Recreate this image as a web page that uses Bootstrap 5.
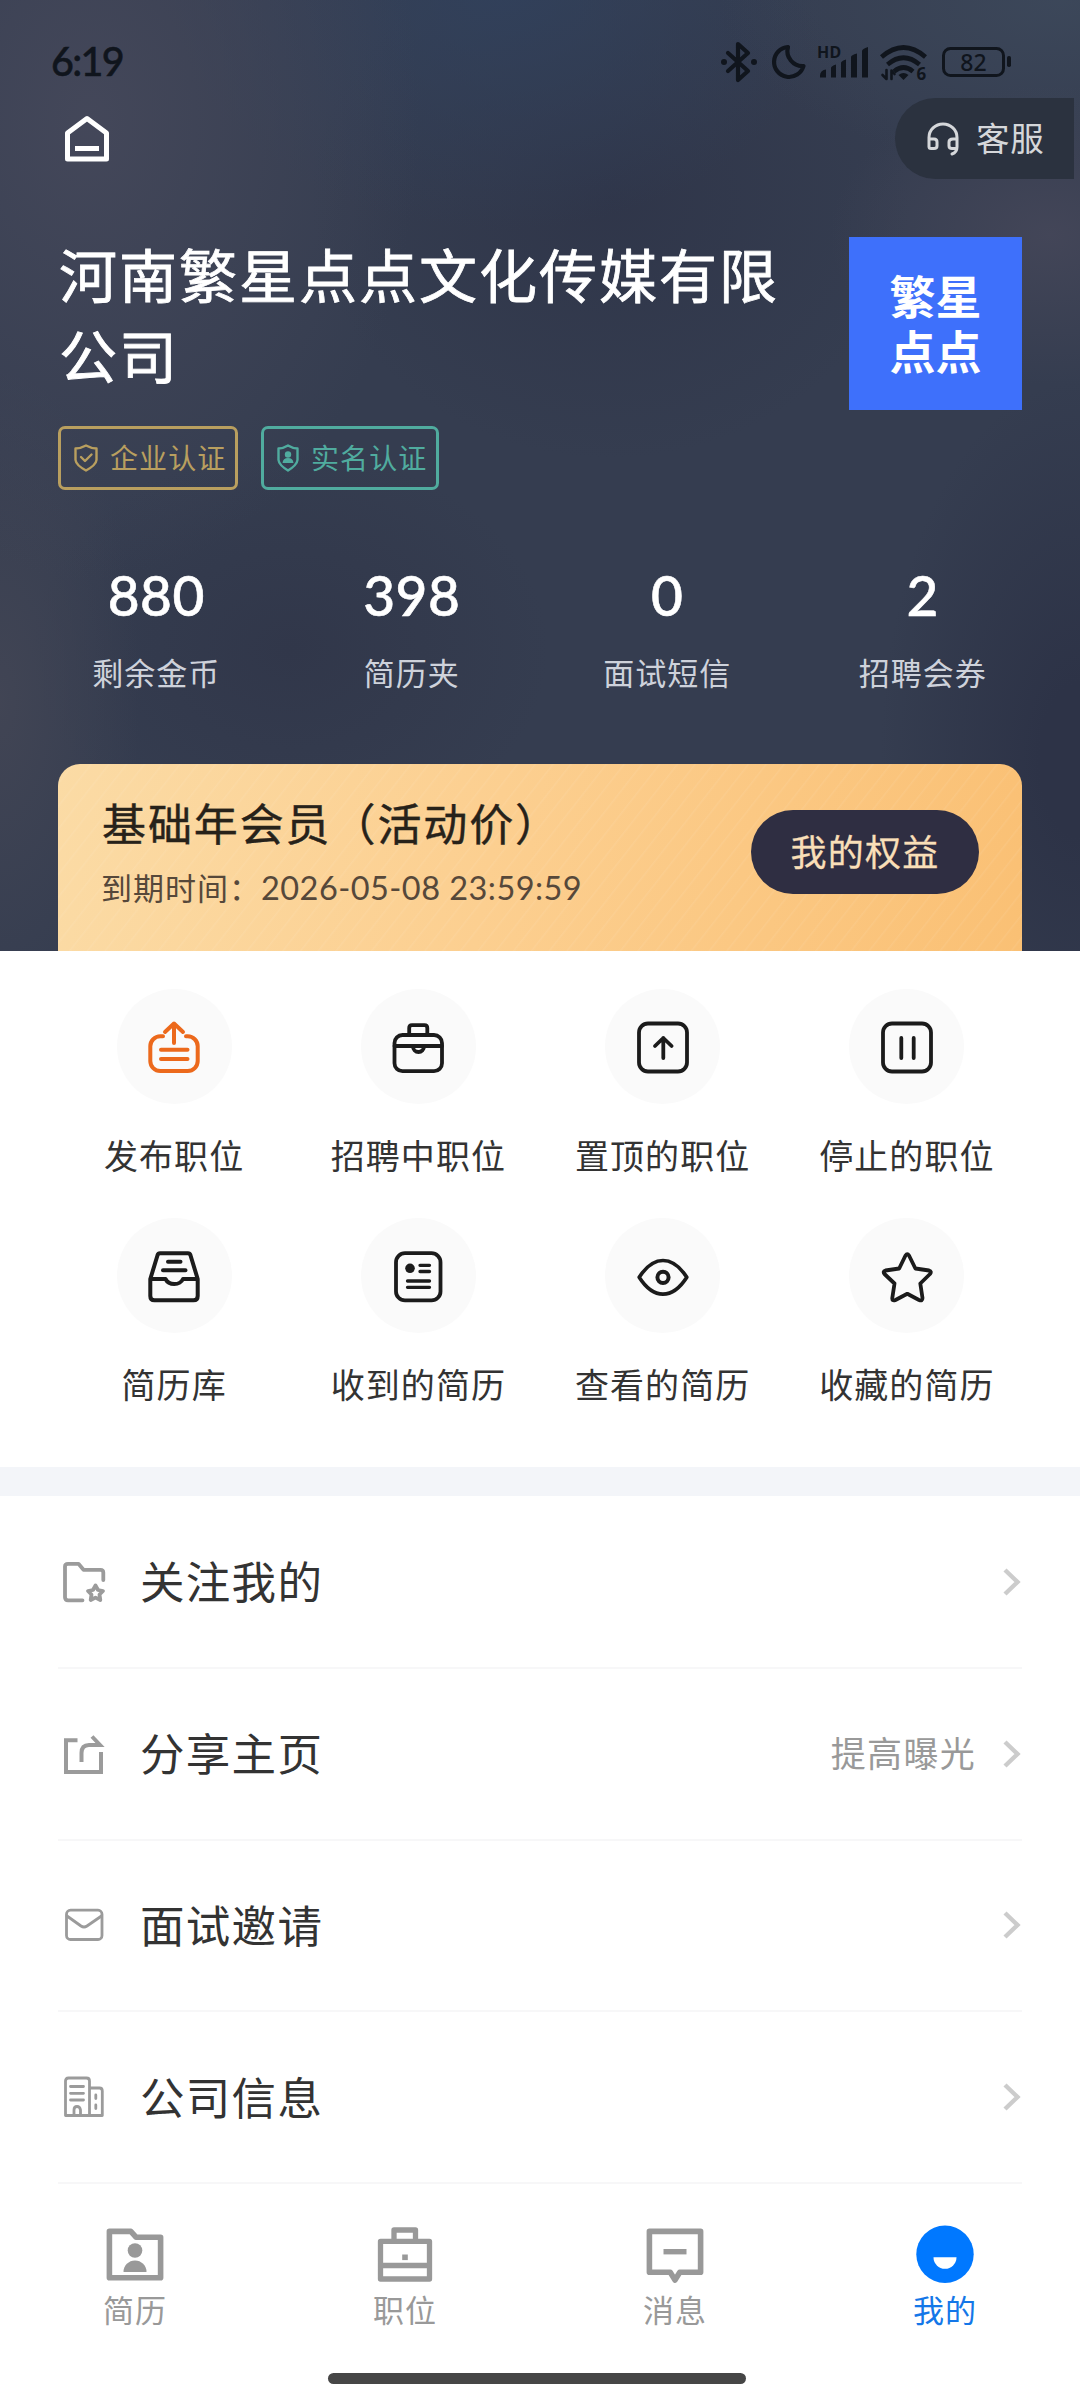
<!DOCTYPE html>
<html lang="zh-CN">
<head>
<meta charset="utf-8">
<meta name="viewport" content="width=device-width, initial-scale=1">
<title>我的</title>
<link href="https://cdn.jsdelivr.net/npm/bootstrap@5.3.0/dist/css/bootstrap.min.css" rel="stylesheet">
<style>
body{width:1080px;height:2400px;overflow:hidden;background:#fff;color:#333;font-family:"Noto Sans CJK SC","Noto Sans",sans-serif}
svg{display:block;flex:none;overflow:visible}
.ln{fill:none;stroke:currentColor;stroke-linecap:round;stroke-linejoin:round}
.hero{height:951px;color:#fff;background:
 radial-gradient(ellipse 330px 460px at 90px 120px,#494b5dbb 0,#494b5d00 100%),
 radial-gradient(ellipse 220px 150px at 1050px 235px,#4a4a5caa 0,#4a4a5c00 100%),
 radial-gradient(ellipse 340px 170px at 1060px 0,#42506288 0,#42506200 100%),
 radial-gradient(ellipse 330px 240px at 500px -10px,#31415cdd 0,#31415c00 100%),
 radial-gradient(ellipse 300px 260px at 610px 200px,#2e3448cc 0,#2e344800 100%),
 radial-gradient(ellipse 140px 330px at 0 700px,#434655dd 0,#43465500 100%),
 radial-gradient(ellipse 260px 200px at 290px 650px,#2f3447aa 0,#2f344700 100%),
 radial-gradient(ellipse 200px 380px at 1080px 760px,#2d3347 20%,#2d334700 100%),
 #353d50}
.status{height:98px;padding:0 59px 0 51px;color:#10151d}
.clock{font:500 39.500px/56px "Lato","Noto Sans",sans-serif;letter-spacing:-1.7px;padding-top:33px;-webkit-text-stroke:.5px #10151d}
.status-icons{margin-top:39px}
.topbar{height:81px;padding-left:64px;padding-right:6px}
.service{width:179px;height:81px;border-radius:41px 0 0 41px;background:#2b323f;color:#d5d7da;padding-left:31px;gap:16px;font-size:33.500px;letter-spacing:.8px;line-height:50px}
.service span{margin-top:-3px}
.company{padding:58px 58px 0 59px;height:241px}
.company h1{font-size:58px;letter-spacing:2px;line-height:80.500px;width:740px;margin:-4px 0 0;font-weight:400;-webkit-text-stroke:.8px #fff}
.logo{width:173px;height:173px;background:#3e70fb;font-size:46px;font-weight:700;line-height:55px;padding-top:30px}
.tags{padding:6px 0 0 58px;height:70px;gap:23px}
.tag{height:64px;border:3px solid;border-radius:7px;font-size:28px;letter-spacing:1.1px;padding-left:13px;gap:12px}
.tag span{margin-top:-2px}
.tag.gold{width:180px;color:#b99f5f}.tag.teal{width:178px;color:#50ac9f;padding-left:13px}
.stats{height:274px;padding:76px 29.500px 0 28.500px}
.stats b{display:block;font:500 55px/56px "Lato","Noto Sans",sans-serif;letter-spacing:.5px;-webkit-text-stroke:.6px #fff;margin-top:1px}
.stats span{display:block;font-size:31px;letter-spacing:1px;line-height:46px;color:#ced2db;margin-top:26px}
.vip{margin:0 58px;height:187px;border-radius:22px 22px 0 0;padding:0 43px 0 44px;color:#27221a;
 background:repeating-linear-gradient(128deg,#fff0 0,#fff0 11px,#ffffff12 12px,#fff0 14px),linear-gradient(100deg,#fbdba5 0,#fccf90 45%,#fac074 100%)}
.vip h2{font-size:44px;letter-spacing:1.900px;line-height:60px;margin:0;font-weight:400;padding-top:28px;-webkit-text-stroke:.4px #27221a}
.vip p{font-size:31px;letter-spacing:1px;line-height:44px;margin:13px 0 0 -1px;color:#56483a;white-space:nowrap}
.vip p span{font-family:"Lato",sans-serif;font-size:32.500px;letter-spacing:.45px}
.rights{width:228px;height:84px;border-radius:42px;background:#2f2e42;color:#f9dfb8;font-size:36px;letter-spacing:1.200px;line-height:76px;margin-top:46px;border:0;padding:0 0 4px;-webkit-text-stroke:.3px #f9dfb8}
.tools{height:516px;padding:38px 51px 0 52px}
.tool{height:229px}
.disc{width:115px;height:115px;border-radius:50%;background:#fafafa;color:#1b1b1b}
.tool span{font-size:34px;letter-spacing:1.100px;line-height:50px;margin-top:26px;white-space:nowrap}
.tool .orange{color:#ec691c}
.band{height:29px;background:#f3f5f9}
.menu{padding:1px 58px 0;height:688px}
.entry{height:171.800px;border-bottom:2px solid #f7f7f8;padding:0 1px 0 4px;font-size:44.500px;letter-spacing:1.300px;line-height:64px}
.entry svg{color:#9b9b9b}
.entry .txt{margin-left:34px;margin-top:-3px}
.entry .hint{font-size:35px;letter-spacing:1.300px;color:#999;margin-right:27px;margin-top:-3px}
.entry svg.chev{color:#ccc}
.tabs{height:189px}
.tabitem{padding-top:31px;color:#999;font-size:31px;letter-spacing:1px;line-height:44px}
.tabitem.on{color:#1477e8}
.tabitem svg{margin-bottom:8px;margin-right:1px}
.pill{width:418px;height:11px;border-radius:6px;background:#464646;margin-left:328px}
</style>
</head>
<body>
<header class="hero">
 <div class="status d-flex justify-content-between">
  <div class="clock">6:19</div>
  <svg class="status-icons" width="300" height="42" viewBox="0 0 300 42" fill="currentColor">
   <path class="ln" d="M7 14L27 32L17 41V5L27 14L7 32" stroke-width="4.200"/>
   <circle cx="3" cy="23" r="3"/><circle cx="33" cy="23" r="3"/>
   <path class="ln" stroke-width="4.200" d="M67 8A15 15 0 1 0 82.500 27A15 15 0 0 1 67 8Z"/>
   <text x="96" y="19" font-family="Noto Sans" font-weight="700" font-size="16" letter-spacing=".3">HD</text>
   <path d="M99 38.500v-2a6 6 0 0 1 6-6v8zM110 29q0-2 5-3.500v13h-5zM120 24q0-2 5-3.500v18h-5zM130 18q0-2 6-3.500v24h-6zM141 12q0-2 6-4v30.500h-6z"/>
   <g fill="none" stroke="currentColor" stroke-width="4.600"><path d="M160.500 18Q182.500-1 204.500 18"/><path d="M166.500 25.500Q182.500 12 198.500 25.500"/><path d="M173 32.500Q182.500 24.500 192 32.500"/></g>
   <path d="M177.500 36q5-4 10 0l-5 5z"/>
   <path class="ln" stroke-width="2.600" d="M165.500 31v9l-4-4M170.500 40V31.500l3 3.500"/>
   <text x="195.500" y="41" font-family="Noto Sans" font-weight="700" font-size="17">6</text>
   <rect x="222.500" y="9.500" width="60" height="27" rx="7" fill="none" stroke="currentColor" stroke-width="3"/>
   <rect x="286" y="17" width="4" height="11" rx="1.800"/>
   <text x="252.500" y="31.500" text-anchor="middle" font-family="Noto Sans" font-weight="500" font-size="23">82</text>
  </svg>
 </div>
 <div class="topbar d-flex justify-content-between align-items-center">
  <svg width="46" height="48" viewBox="0 0 46 48"><path d="M3.500 18L23 3.500L42.500 18V44H3.500Z" fill="none" stroke="#fff" stroke-width="5" stroke-linejoin="round"/><path d="M11 33.500H35" stroke="#fff" stroke-width="5"/></svg>
  <div class="service d-flex align-items-center">
   <svg class="ln" width="34" height="34" viewBox="0 0 34 34" stroke-width="3"><path d="M3 25V15.500A14 13.500 0 0 1 31 15.500V25C31 29 29 31 26 32M3 17H8Q11 17 11 20V24Q11 26.500 8 26.500H5Q3 26.500 3 24.500M31 17H27Q23 17 23 20V24Q23 26.500 26 26.500H30"/></svg>
   <span>客服</span>
  </div>
 </div>
 <div class="company d-flex justify-content-between">
  <h1>河南繁星点点文化传媒有限公司</h1>
  <div class="logo text-center">繁星<br>点点</div>
 </div>
 <div class="tags d-flex">
  <div class="tag gold d-flex align-items-center">
   <svg class="ln" width="24" height="28" viewBox="0 0 24 28" stroke-width="2.400"><path d="M12 1.500Q17 4.300 22.500 4.500V16Q22 21 12 26.500Q2 21 1.500 16V4.500Q7 4.300 12 1.500Z"/><path d="M7 13L11 17L17.500 10.500"/></svg>
   <span>企业认证</span>
  </div>
  <div class="tag teal d-flex align-items-center">
   <svg width="22" height="28" viewBox="0 0 22 28"><path class="ln" stroke-width="2.400" d="M11 1.500Q15.500 4.300 20.500 4.500V16Q20 21 11 26.500Q2 21 1.500 16V4.500Q6.500 4.300 11 1.500Z"/><circle cx="11" cy="10.500" r="3.200" fill="currentColor"/><path d="M5.500 19Q6 14 11 14T16.500 19Z" fill="currentColor"/></svg>
   <span>实名认证</span>
  </div>
 </div>
 <div class="stats row g-0 text-center">
  <div class="col"><b>880</b><span>剩余金币</span></div>
  <div class="col"><b>398</b><span>简历夹</span></div>
  <div class="col"><b>0</b><span>面试短信</span></div>
  <div class="col"><b>2</b><span>招聘会券</span></div>
 </div>
 <div class="vip d-flex justify-content-between">
  <div><h2>基础年会员（活动价）</h2><p>到期时间：<span>2026-05-08 23:59:59</span></p></div>
  <button class="rights">我的权益</button>
 </div>
</header>

<section class="tools row g-0 align-content-start text-center">
 <div class="tool col-3 d-flex flex-column align-items-center"><div class="disc orange d-flex align-items-center justify-content-center"><svg class="ln" width="60" height="60" stroke-width="4"><path d="M19 19.300H16.300A10 10 0 0 0 6.300 29.300V44A10 10 0 0 0 16.300 54H43.700A10 10 0 0 0 53.700 44V29.300A10 10 0 0 0 43.700 19.300H42M30 26V6.500M21 15L30 6.500L39 15M17 32.700H43.500M17 42H43.500"/></svg></div><span>发布职位</span></div>
 <div class="tool col-3 d-flex flex-column align-items-center"><div class="disc d-flex align-items-center justify-content-center"><svg class="ln" width="60" height="60" stroke-width="3.800"><rect x="6.500" y="18" width="47.500" height="36.200" rx="8"/><path d="M21.200 18V11Q21.200 8.200 24 8.200H36.500Q39.300 8.200 39.300 11V18M6.500 29H54M25 29.500A5.500 5.500 0 0 0 36 29.500"/></svg></div><span>招聘中职位</span></div>
 <div class="tool col-3 d-flex flex-column align-items-center"><div class="disc d-flex align-items-center justify-content-center"><svg class="ln" width="60" height="60" stroke-width="3.800"><rect x="6" y="6.500" width="48" height="48" rx="9"/><path d="M30.300 41V21M22 29L30.300 21L38.600 29"/></svg></div><span>置顶的职位</span></div>
 <div class="tool col-3 d-flex flex-column align-items-center"><div class="disc d-flex align-items-center justify-content-center"><svg class="ln" width="60" height="60" stroke-width="3.800"><rect x="6" y="6.500" width="48" height="48" rx="9"/><path d="M24.300 21V41M36.700 21V41"/></svg></div><span>停止的职位</span></div>
 <div class="tool col-3 d-flex flex-column align-items-center"><div class="disc d-flex align-items-center justify-content-center"><svg class="ln" width="60" height="60" stroke-width="4"><path d="M6.300 33L13.600 9Q14.200 7.200 16 7.200H44Q45.800 7.200 46.400 9L53.700 33V50Q53.700 54.300 49.500 54.300H10.500Q6.300 54.300 6.300 50ZM6.300 33H21.500Q24 38 30.300 38T39 33H53.700M24 15.700H36.500M19 24.300H41.500"/></svg></div><span>简历库</span></div>
 <div class="tool col-3 d-flex flex-column align-items-center"><div class="disc d-flex align-items-center justify-content-center"><svg class="ln" width="60" height="60" stroke-width="3.300"><rect x="8" y="7.200" width="44.500" height="47.200" rx="9" stroke-width="3.800"/><circle cx="22" cy="22.300" r="4.800" fill="currentColor" stroke="none"/><path d="M32 19.300H41.500M32 25.500H41.500M19.500 35H41.500M19.500 41.300H41.500"/></svg></div><span>收到的简历</span></div>
 <div class="tool col-3 d-flex flex-column align-items-center"><div class="disc d-flex align-items-center justify-content-center"><svg class="ln" width="60" height="60" stroke-width="3.700"><path d="M6.200 31.300Q17 14.500 30 14.500T53.800 31.300Q43 48.200 30 48.200T6.200 31.300Z"/><circle cx="30" cy="31.300" r="5.600" stroke-width="4"/></svg></div><span>查看的简历</span></div>
 <div class="tool col-3 d-flex flex-column align-items-center"><div class="disc d-flex align-items-center justify-content-center"><svg class="ln" width="60" height="60" stroke-width="3.800"><path d="M28.500 9.500Q30.300 7 32 9.500L38.400 22.500L52 24.500Q55 25.500 53 28L43.300 37.500L45.500 52Q45.500 55.500 42 54L30.300 47.800L18.500 54Q15 55.500 15.300 52L17.500 37.500L7.500 28Q5.500 25.500 8.500 24.500L22.200 22.500Z"/></svg></div><span>收藏的简历</span></div>
</section>
<div class="band"></div>

<section class="menu">
 <div class="entry d-flex align-items-center">
  <svg class="ln" width="44" height="44" viewBox="0 0 44 44" stroke-width="3.800"><path d="M20.500 40.300H6Q3 40.300 3 37.300V6.500Q3 3.800 6 3.800H16.500L21.500 9.800H38.500Q41.300 9.800 41.300 12.500V20"/><path stroke-width="3.800" d="M33.500 25.500L36 30L41 31L37.500 34.500L38.300 40L33.500 37.600L28.700 40L29.500 34.500L26 31L31 30Z"/></svg>
  <span class="txt">关注我的</span>
  <svg class="chev ms-auto" width="18" height="28" viewBox="0 0 18 28" fill="none" stroke="currentColor" stroke-width="4.400"><path d="M2 2L14.500 14L2 26"/></svg>
 </div>
 <div class="entry d-flex align-items-center">
  <svg width="44" height="44" viewBox="0 0 44 44" fill="none" stroke="currentColor" stroke-width="4"><path d="M15.500 8.300H4V40H39V20"/><path d="M19.500 30V21Q19.500 13 27 13H38L30 4.500"/></svg>
  <span class="txt">分享主页</span><span class="hint ms-auto">提高曝光</span>
  <svg class="chev" width="18" height="28" viewBox="0 0 18 28" fill="none" stroke="currentColor" stroke-width="4.400"><path d="M2 2L14.500 14L2 26"/></svg>
 </div>
 <div class="entry d-flex align-items-center">
  <svg class="ln" width="44" height="44" viewBox="0 0 44 44" stroke-width="2.800"><rect x="4.500" y="7.200" width="35.500" height="29.300" rx="4"/><path d="M5 13L19 23Q22 25 25 23L39.500 13"/></svg>
  <span class="txt">面试邀请</span>
  <svg class="chev ms-auto" width="18" height="28" viewBox="0 0 18 28" fill="none" stroke="currentColor" stroke-width="4.400"><path d="M2 2L14.500 14L2 26"/></svg>
 </div>
 <div class="entry d-flex align-items-center">
  <svg class="ln" width="44" height="44" viewBox="0 0 44 44" stroke-width="2.800"><path d="M3.500 40.500V6Q3.500 3 6.500 3H24.500Q27.500 3 27.500 6V40.500M27.500 13H37.500Q40.300 13 40.300 16V40.500H3.500M8.500 11.500H21.500M8.500 18.300H21.500M8.500 25H21.500M12 40V35Q12 31.500 15 31.500T18.500 35V40M33.800 20V23.500M33.800 30V33.500"/></svg>
  <span class="txt">公司信息</span>
  <svg class="chev ms-auto" width="18" height="28" viewBox="0 0 18 28" fill="none" stroke="currentColor" stroke-width="4.400"><path d="M2 2L14.500 14L2 26"/></svg>
 </div>
</section>

<nav class="tabs row g-0 text-center">
 <div class="tabitem col d-flex flex-column align-items-center"><svg width="58" height="64" viewBox="0 0 58 64"><path fill="none" stroke="currentColor" stroke-width="5.600" stroke-linejoin="round" d="M3.400 16.400H24.800L30 22.200H54.600V62.800H3.400Z"/><circle cx="29" cy="35.500" r="7.300" fill="currentColor"/><path d="M17.500 57A11.500 11.500 0 0 1 40.500 57Z" fill="currentColor"/></svg><span>简历</span></div>
 <div class="tabitem col d-flex flex-column align-items-center"><svg width="58" height="64" viewBox="0 0 58 64"><path fill="none" stroke="currentColor" stroke-width="5.300" stroke-linejoin="round" d="M4.500 26.400H53.500V64H4.500ZM18 26V15H39.500V26M4.500 50.500H53.500"/><rect x="26.200" y="39.500" width="5.600" height="5.600" fill="currentColor"/></svg><span>职位</span></div>
 <div class="tabitem col d-flex flex-column align-items-center"><svg width="58" height="64" viewBox="0 0 58 64"><path fill="none" stroke="currentColor" stroke-width="5.600" stroke-linejoin="round" d="M3.400 16.400H54.600V57.300H33.800L29 65L24.200 57.300H3.400Z"/><path d="M17.500 36.700H40.500" stroke="currentColor" stroke-width="5.400"/></svg><span>消息</span></div>
 <div class="tabitem on col d-flex flex-column align-items-center"><svg width="58" height="64" viewBox="0 0 58 64"><circle cx="29" cy="39.300" r="28.700" fill="#0078ff"/><path d="M17.500 42.300H40.500A11.500 11.500 0 0 1 17.500 42.300Z" fill="#fff"/></svg><span>我的</span></div>
</nav>
<div class="pill"></div>
<script src="https://cdn.jsdelivr.net/npm/bootstrap@5.3.0/dist/js/bootstrap.bundle.min.js"></script>
</body>
</html>
